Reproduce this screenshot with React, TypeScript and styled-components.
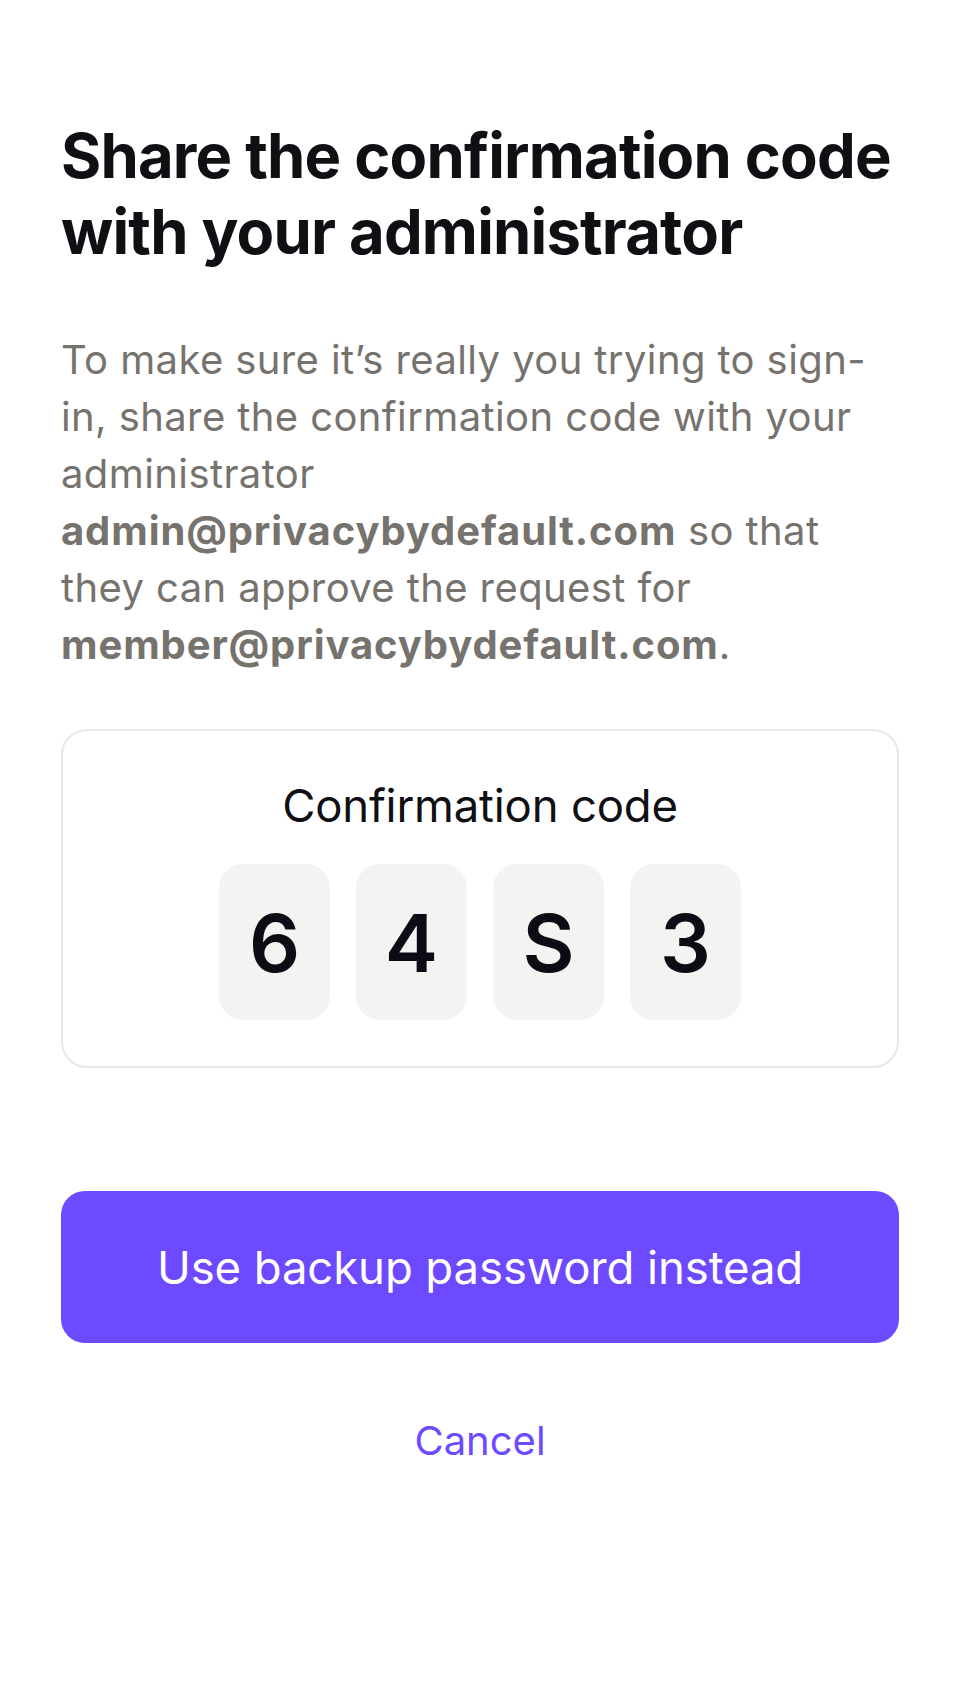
import React from "react";
import styled, { createGlobalStyle } from "styled-components";

const Global = createGlobalStyle`
  html, body { margin: 0; padding: 0; background: #ffffff; }
  body { font-family: Inter, "Noto Sans", sans-serif; -webkit-font-smoothing: antialiased; }
  * { box-sizing: border-box; }
`;

const Page = styled.main`
  width: 960px;
  min-height: 1704px;
  padding: 118px 61px 0;
  display: flex;
  flex-direction: column;
`;

const Title = styled.h1`
  margin: 0;
  font-size: 61.5px;
  line-height: 76px;
  font-weight: 700;
  letter-spacing: -0.8px;
  color: #0f0f14;
`;

const Body = styled.p`
  margin: 61px 0 0;
  font-size: 40px;
  line-height: 57px;
  font-weight: 400;
  letter-spacing: 0.4px;
  color: #76726d;
`;

const Strong = styled.strong`
  font-weight: 700;
  letter-spacing: 0.9px;
`;

const Card = styled.section`
  margin-top: 56px;
  border: 2.5px solid #eae8e5;
  border-radius: 26px;
  padding: 51px 0 46px;
  display: flex;
  flex-direction: column;
  align-items: center;
`;

const Label = styled.div`
  font-size: 45.5px;
  line-height: 48px;
  letter-spacing: -0.2px;
  color: #0f0f14;
`;

const Digits = styled.div`
  margin-top: 34px;
  display: flex;
  gap: 26px;
`;

const Digit = styled.div`
  width: 111px;
  height: 156px;
  border-radius: 24px;
  background: #f4f3f1;
  display: flex;
  align-items: center;
  justify-content: center;
  font-size: 80px;
  font-weight: 600;
  color: #0c0c14;
`;

const PrimaryButton = styled.button`
  margin-top: 123px;
  height: 152px;
  border: none;
  border-radius: 24px;
  background: #6d4aff;
  color: #ffffff;
  font-family: inherit;
  font-size: 45.5px;
  font-weight: 400;
  letter-spacing: -0.1px;
  cursor: pointer;
`;

const LinkButton = styled.button`
  margin-top: 74px;
  align-self: center;
  border: none;
  background: none;
  padding: 0;
  color: #6d4aff;
  font-family: inherit;
  font-size: 40px;
  line-height: 48px;
  cursor: pointer;
`;

export default function App() {
  const code = ["6", "4", "S", "3"];
  return (
    <>
      <Global />
      <Page>
        <Title>Share the confirmation code with your administrator</Title>
        <Body>
          To make sure it’s really you trying to sign-
          <br />
          in, share the confirmation code with your
          <br />
          administrator
          <br />
          <Strong>admin@privacybydefault.com</Strong> so that
          <br />
          they can approve the request for
          <br />
          <Strong>member@privacybydefault.com</Strong>.
        </Body>
        <Card>
          <Label>Confirmation code</Label>
          <Digits>
            {code.map((c, i) => (
              <Digit key={i}>{c}</Digit>
            ))}
          </Digits>
        </Card>
        <PrimaryButton>Use backup password instead</PrimaryButton>
        <LinkButton>Cancel</LinkButton>
      </Page>
    </>
  );
}
